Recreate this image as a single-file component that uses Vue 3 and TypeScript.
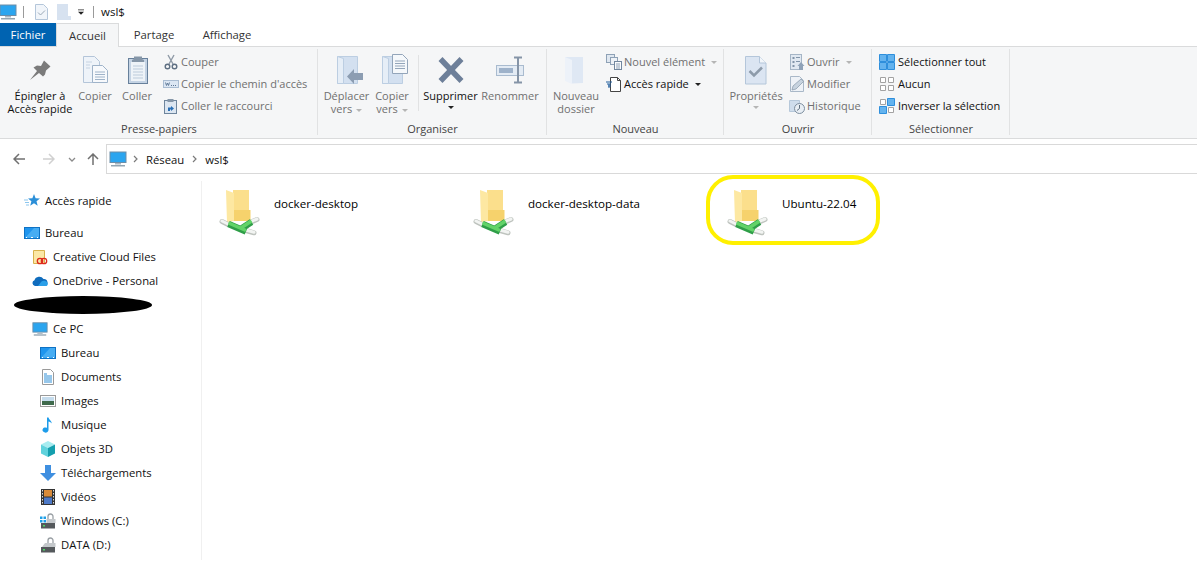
<template>
  <div class="win">
    <svg class="defs" width="0" height="0">
      <defs>
        <symbol id="pc" viewBox="0 0 18 16">
          <rect x="1" y="1" width="16" height="10.5" fill="#2ba5ef" stroke="#6c8da8" />
          <rect x="6" y="12" width="6" height="1.5" fill="#a9b7c2" />
          <rect x="2" y="14" width="14" height="1.5" fill="#93a5b2" />
        </symbol>
        <symbol id="pin" viewBox="0 0 32 32">
          <path fill="#7b7b7b" d="M6 26 13 17 9.500 13.500 13 11.500 17 12 20 6.500 26.500 12.500 22 16.500 21 20.500 19 22.500 15 19Z" />
        </symbol>
        <symbol id="copy" viewBox="0 0 32 32">
          <path d="M4.500 2.500h11l5 5v21h-16z" fill="#eef3f9" stroke="#b4c5d9" />
          <path d="M13.500 11.500h10l5 5v12h-15z" fill="#f7f9fc" stroke="#9fb3c9" />
          <path d="M16 18h10M16 20.500h10M16 23h10M16 25.500h10" stroke="#9fb3c9" />
          <path d="M7 8h6M7 11h4M7 14h4" stroke="#c6d3e2" />
        </symbol>
        <symbol id="paste" viewBox="0 0 32 32">
          <rect x="7.500" y="4.500" width="19" height="25" fill="#c4d3e4" stroke="#67809b" />
          <rect x="10" y="8" width="14" height="19" fill="#eef3f8" />
          <path d="M12 12h10M12 15h10M12 18h10M12 21h10M12 24h10" stroke="#bccbdb" />
          <path d="M13 5V2.500h8V5l2 1v2H11V6z" fill="#8596a8" />
        </symbol>
        <symbol id="move" viewBox="0 0 32 32">
          <path d="M6.500 2.500h20v27h-20z" fill="#d3e0f0" stroke="#bccee2" />
          <path d="M6.500 2.500l6 2v25h-6z" fill="#e6eef7" stroke="#bccee2" />
          <path d="M16 22.500 23 15v4h9v7h-9v4z" fill="#8c9db2" />
        </symbol>
        <symbol id="copyto" viewBox="0 0 32 32">
          <path d="M6.500 2.500h20v27h-20z" fill="#d3e0f0" stroke="#bccee2" />
          <path d="M6.500 2.500l6 2v25h-6z" fill="#e6eef7" stroke="#bccee2" />
          <path d="M16.500.500h10l5 5v14h-15z" fill="#f5f8fb" stroke="#93a5ba" />
          <path d="M19 7h10M19 9.500h10M19 12h10M19 14.500h10" stroke="#93a5ba" />
        </symbol>
        <symbol id="del" viewBox="0 0 32 32">
          <path d="M5.500 5 26.500 27M26.500 5 5.500 27" stroke="#6d7f99" stroke-width="5.500" />
        </symbol>
        <symbol id="rename" viewBox="0 0 32 32">
          <rect x="2.500" y="11.500" width="27" height="10" fill="#e3ebf4" stroke="#a9bbcf" />
          <rect x="5" y="14" width="14" height="5" fill="#9eb2ca" />
          <path d="M20 3.500h8M20 28.500h8M24 4v24" stroke="#8594a7" stroke-width="2" />
        </symbol>
        <symbol id="newfolder" viewBox="0 0 32 32">
          <path d="M5 3h18v26l-11 .5z" fill="#dfe8f4" />
          <path d="M5 3l7 3v24l-7-3z" fill="#edf2f9" />
        </symbol>
        <symbol id="props" viewBox="0 0 32 32">
          <path d="M5.500 2.500h14l6.500 6.500v21h-20.500z" fill="#dbe5f2" stroke="#b4c6da" />
          <path d="M19.500 2.500V9H26" fill="#f2f6fa" stroke="#b4c6da" />
          <path d="M9.500 17 14 21.500l8-8" fill="none" stroke="#8d9baa" stroke-width="2.500" />
        </symbol>
        <symbol id="cut" viewBox="0 0 16 16">
          <path d="M5 1l5 9M11 1 6 10" stroke="#8f9aa6" stroke-width="1.400" fill="none" />
          <circle cx="4.500" cy="12.500" r="2.300" fill="none" stroke="#5e6f82" stroke-width="1.400" />
          <circle cx="11.500" cy="12.500" r="2.300" fill="none" stroke="#5e6f82" stroke-width="1.400" />
        </symbol>
        <symbol id="path" viewBox="0 0 16 16">
          <rect x=".5" y="4.500" width="15" height="7" fill="#dbe6f3" stroke="#a9bcd2" />
          <path d="M2.500 6.500 3.500 9.500 4.500 7 5.500 9.500 6.500 6.500" fill="none" stroke="#5b7594" stroke-width=".9" />
          <path d="M8 9.500h1M10 9.500h1M12 9.500h1" stroke="#5b7594" />
        </symbol>
        <symbol id="shortcut" viewBox="0 0 16 16">
          <rect x="1.500" y="2.500" width="12" height="13" fill="#dce6f1" stroke="#6e859d" />
          <rect x="4.500" y="1" width="6" height="3" fill="#8596a8" />
          <path d="M5 13V9.500h3V8l3 2.500L8 13v-1.500H7V13z" fill="#2a6fb5" />
        </symbol>
        <symbol id="newitem" viewBox="0 0 16 16">
          <rect x=".5" y=".5" width="8" height="8" fill="#dfe7f0" stroke="#8ea1b6" />
          <rect x="4.500" y="3.500" width="7" height="7" fill="#eef2f7" stroke="#8ea1b6" />
          <rect x="8.500" y="7.500" width="7" height="8" fill="#fafbfd" stroke="#73889f" />
          <path d="M10 10h4M10 12h4M10 14h4" stroke="#8ea1b6" />
        </symbol>
        <symbol id="quick" viewBox="0 0 16 16">
          <path d="M4.500 1.500h7l3 3v11h-10z" fill="#fff" stroke="#454545" />
          <path d="M11.500 1.500v3h3" fill="none" stroke="#454545" />
          <path d="M0 6h6M1 8h4M2 10h3M3 8v4" stroke="#1f5d9c" />
        </symbol>
        <symbol id="open" viewBox="0 0 16 16">
          <rect x="1.500" y=".5" width="11" height="15" fill="#e0e8f1" stroke="#a5b5c6" />
          <path d="M3.500 3h2v2h-2zM3.500 7h2v2h-2zM3.500 11h2v2h-2z" fill="#8194a9" />
          <path d="M7 3.500h4M7 7.500h4" stroke="#8194a9" />
          <path d="M12 8l3.500 4H14v4h-4v-4H8.500z" fill="#8fa2b8" />
        </symbol>
        <symbol id="edit" viewBox="0 0 16 16">
          <path d="M1.500.5h9l4 4v11h-13z" fill="#eef2f7" stroke="#a9b8c8" />
          <path d="M3 14l1-4L12 3l2.500 2.500L7 13z" fill="#c7d3df" stroke="#8596a8" stroke-width=".7" />
        </symbol>
        <symbol id="history" viewBox="0 0 16 16">
          <path d="M.5 2.500h10v11H.5z" fill="#cfddec" stroke="#b6c8da" />
          <circle cx="10.500" cy="10.500" r="5" fill="#e8eef4" stroke="#7d8e9f" />
          <path d="M10.500 7v3.500l-2.500 2" fill="none" stroke="#5f7080" />
        </symbol>
        <symbol id="selall" viewBox="0 0 16 16">
          <path d="M.5.500h7v7h-7zM8.500.500h7v7h-7zM.5 8.500h7v7h-7zM8.500 8.500h7v7h-7z" fill="#64b3ee" stroke="#2e8fdc" />
        </symbol>
        <symbol id="selnone" viewBox="0 0 16 16">
          <path d="M1.500 1.500h5v5h-5zM9.500 1.500h5v5h-5zM1.500 9.500h5v5h-5zM9.500 9.500h5v5h-5z" fill="#fff" stroke="#a2a2a2" />
        </symbol>
        <symbol id="selinv" viewBox="0 0 16 16">
          <path d="M1.500 1.500h5v5h-5zM9.500 9.500h5v5h-5z" fill="#fff" stroke="#a2a2a2" />
          <path d="M8.500.500h7v7h-7zM.5 8.500h7v7h-7z" fill="#64b3ee" stroke="#2e8fdc" />
        </symbol>
        <symbol id="star" viewBox="0 0 16 16">
          <path d="M10 1l1.600 4.300 4.400.2-3.500 2.800 1.200 4.500L10 10.300 6.200 12.800l1.200-4.500L4 5.500l4.400-.2z" fill="#2b8fd8" />
          <path d="M0 7h4M1 9.500h4M2 12h3" stroke="#8cc6ee" />
        </symbol>
        <symbol id="desktop" viewBox="0 0 16 12">
          <rect x=".5" y=".5" width="15" height="11" fill="#1f95ee" stroke="#0f72c4" />
          <path d="M1 11 10 1h5v9.500z" fill="#47adf3" />
          <path d="M2 10.500h1M7 10.500h2M13 10.500h1" stroke="#fff" />
        </symbol>
        <symbol id="cc" viewBox="0 0 16 16">
          <path d="M1.500 1.500h11v13h-11z" fill="#fbe8a6" stroke="#d8b24c" />
          <circle cx="8" cy="12" r="2.700" fill="none" stroke="#dd2a1c" stroke-width="1.300" />
          <circle cx="12" cy="12" r="2.700" fill="none" stroke="#dd2a1c" stroke-width="1.300" />
        </symbol>
        <symbol id="onedrive" viewBox="0 0 16 12">
          <path d="M3 11a3 3 0 0 1-.5-5.800A5 5 0 0 1 11.500 4 3.600 3.600 0 0 1 13 11z" fill="#0f6cbd" />
          <path d="M6 11l3.500-4.500c2-1.200 4.500-.8 6 1.200.8 1.500 0 3.300-2 3.300z" fill="#2a9fe8" />
        </symbol>
        <symbol id="docs" viewBox="0 0 16 16">
          <path d="M2.500.5h8l3 3v12h-11z" fill="#fff" stroke="#9a9a9a" />
          <path d="M4 5h3M4 7h8M4 9h8M4 11h8M4 13h8" stroke="#2f8fd6" />
        </symbol>
        <symbol id="images" viewBox="0 0 16 12">
          <rect x=".5" y=".5" width="15" height="11" fill="#fff" stroke="#9a9a9a" />
          <rect x="2" y="2" width="12" height="4" fill="#c5dced" />
          <rect x="2" y="6" width="12" height="4" fill="#3f6a4c" />
        </symbol>
        <symbol id="music" viewBox="0 0 16 16">
          <path d="M7 .5h1.500c.4 2.400 3 3.200 3.500 6-1-1-2.300-1.800-3.500-2V13a3 2.600 0 1 1-1.500-2.200z" fill="#1d9cea" />
        </symbol>
        <symbol id="cube" viewBox="0 0 16 16">
          <path d="M8 0l7 3.500-7 3.500-7-3.500z" fill="#a7ecf0" />
          <path d="M1 3.500l7 3.500v9l-7-3.500z" fill="#5fd2dc" />
          <path d="M15 3.500l-7 3.500v9l7-3.500z" fill="#149fae" />
        </symbol>
        <symbol id="down" viewBox="0 0 16 16">
          <path d="M5 0h6v8h5l-8 8-8-8h5z" fill="#3f8fe0" />
        </symbol>
        <symbol id="film" viewBox="0 0 16 16">
          <rect x="1" y="0" width="14" height="16" fill="#333" />
          <rect x="4" y="1" width="8" height="6.500" fill="#d98b3a" />
          <rect x="4" y="8.500" width="8" height="6.500" fill="#4d79c7" />
          <path d="M2.500 1v14M13.500 1v14" stroke="#ddd" stroke-dasharray="1.500 1.500" />
        </symbol>
        <symbol id="winc" viewBox="0 0 16 16">
          <path d="M0 3.500h2.500V6H0zM3.500 3.500H6V6H3.500zM0 7h2.500v2.500H0zM3.500 7H6v2.500H3.500z" fill="#1ea0e8" />
          <path d="M8 7V3.500a2.500 2.500 0 0 1 5 0V7" fill="none" stroke="#9aa0a5" stroke-width="1.300" />
          <rect x="6.500" y="6" width="9" height="4" fill="#c4c8cb" />
          <rect x="1" y="10" width="14" height="5.500" fill="#55595c" />
          <rect x="3" y="12" width="2" height="1.500" fill="#4cd964" />
        </symbol>
        <symbol id="data" viewBox="0 0 16 16">
          <path d="M8 7V3.500a2.500 2.500 0 0 1 5 0V7" fill="none" stroke="#9aa0a5" stroke-width="1.300" />
          <path d="M2 10l3-4h10.500v4z" fill="#c4c8cb" />
          <rect x="1" y="10" width="14" height="5.500" fill="#55595c" />
          <rect x="3" y="12" width="2" height="1.500" fill="#4cd964" />
        </symbol>
        <symbol id="netfolder" viewBox="0 0 48 48">
          <path d="M17 2h16v20h1.500v11H17z" fill="#f6d26c" />
          <path d="M17 2h16v20H17z" fill="#fbdf8c" />
          <path d="M10 2l8 3v28l-7 1.500z" fill="#fde8a2" />
          <path d="M6 33.500 12 36.500M30 42.500 38 44.800M35 34l6-2.500" stroke="#bfc4bf" stroke-width="5" stroke-linecap="round" />
          <path d="M6 33 12 36M30 42 38 44.300M35 33.500l6-2.500" stroke="#f2f4f2" stroke-width="3" stroke-linecap="round" />
          <path d="M12.500 36 30 43.500M24 41.500 35.500 34" stroke="#2f9e48" stroke-width="6.500" />
          <path d="M12.500 35 30 42.500M24 40.500 35.500 33" stroke="#62d368" stroke-width="3.500" />
        </symbol>
      </defs>
    </svg>

    <div class="titlebar">
      <svg class="title-pc"><use href="#pc" /></svg>
      <span class="vsep"></span>
      <svg class="qa-doc" viewBox="0 0 13 16">
        <path d="M.5.5h8l4 4v11H.5z" fill="#f1f5fa" stroke="#b4c6da" />
        <path d="M3 8.500l2.500 2.500 4.500-4.500" fill="none" stroke="#9aa8b6" />
      </svg>
      <svg class="qa-folder" viewBox="0 0 14 16">
        <path d="M0 0h11v12h3v4H0z" fill="#d7e2f0" />
      </svg>
      <svg class="qa-menu" viewBox="0 0 8 7">
        <path d="M0 0h8v1H0zM0 3h8L4 7z" fill="#222" />
      </svg>
      <span class="vsep last"></span>
      <span class="title-text">wsl$</span>
    </div>

    <div class="tabs">
      <div class="tab file">Fichier</div>
      <div class="tab home">Accueil</div>
      <div class="tab share">Partage</div>
      <div class="tab view">Affichage</div>
    </div>

    <div class="ribbon">
      <section v-for="g in groups" :key="g.label" class="group" :class="g.cls">
        <div class="group-body">
          <template v-for="(c, i) in g.items" :key="i">
            <div v-if="c.kind === 'sep'" class="col-sep"><span></span></div>
            <div v-else-if="c.kind === 'big'" class="big" :class="{ off: c.off }">
              <svg class="big-ic"><use :href="'#' + c.icon" /></svg>
              <div class="big-txt">
                <div v-for="l in c.lines" :key="l">{{ l }}<i v-if="c.inlineCaret && l === c.lines[c.lines.length - 1]" class="caret gray"></i></div>
                <i v-if="c.belowCaret" class="caret block" :class="{ gray: c.off }"></i>
              </div>
            </div>
            <div v-else class="smalls">
              <div v-for="r in c.rows" :key="r.text" class="small" :class="{ off: r.off }">
                <svg class="small-ic"><use :href="'#' + r.icon" /></svg>
                <span>{{ r.text }}</span>
                <i v-if="r.caret" class="caret" :class="{ gray: r.off }"></i>
              </div>
            </div>
          </template>
        </div>
        <div class="group-label">{{ g.label }}</div>
      </section>
    </div>

    <div class="navbar">
      <div class="nav-btns">
        <svg class="back" viewBox="0 0 12 12"><path d="M6 1 1 6l5 5M1 6h11" fill="none" stroke="#707070" stroke-width="1.500" /></svg>
        <svg class="fwd" viewBox="0 0 12 12"><path d="M6 1l5 5-5 5M11 6H0" fill="none" stroke="#d0d0d0" stroke-width="1.500" /></svg>
        <svg class="recent" viewBox="0 0 8 5"><path d="M1 1l3 3 3-3" fill="none" stroke="#8a8a8a" stroke-width="1.300" /></svg>
        <svg class="up" viewBox="0 0 12 12"><path d="M1 6l5-5 5 5M6 1v11" fill="none" stroke="#707070" stroke-width="1.500" /></svg>
      </div>
      <div class="address">
        <svg class="addr-pc"><use href="#pc" /></svg>
        <svg class="chev" viewBox="0 0 5 8"><path d="M1 1l3 3-3 3" fill="none" stroke="#7a7a7a" stroke-width="1.200" /></svg>
        <span class="crumb">Réseau</span>
        <svg class="chev" viewBox="0 0 5 8"><path d="M1 1l3 3-3 3" fill="none" stroke="#7a7a7a" stroke-width="1.200" /></svg>
        <span class="crumb">wsl$</span>
      </div>
    </div>

    <div class="body">
      <nav class="side">
        <template v-for="n in navItems" :key="n.text">
          <div v-if="n.hidden" class="blot"></div>
          <div v-else class="nav-row" :class="['lv' + n.level, { spaced: n.spaced }]">
            <svg class="nav-ic"><use :href="'#' + n.icon" /></svg>
            <span>{{ n.text }}</span>
          </div>
        </template>
      </nav>
      <main class="files">
        <div v-for="f in folders" :key="f.name" class="file-item">
          <svg class="file-ic"><use href="#netfolder" /></svg>
          <span class="file-name">{{ f.name }}</span>
          <span v-if="f.marked" class="mark"></span>
        </div>
      </main>
    </div>
  </div>
</template>

<script setup lang="ts">
interface Row { icon: string; text: string; off?: boolean; caret?: boolean }
interface Cell {
  kind: 'big' | 'small' | 'sep'
  icon?: string
  lines?: string[]
  off?: boolean
  inlineCaret?: boolean
  belowCaret?: boolean
  rows?: Row[]
}
interface Group { label: string; cls: string; items: Cell[] }

const groups: Group[] = [
  {
    label: 'Presse-papiers',
    cls: 'g-clip',
    items: [
      { kind: 'big', icon: 'pin', lines: ['Épingler à', 'Accès rapide'] },
      { kind: 'big', icon: 'copy', lines: ['Copier'], off: true },
      { kind: 'big', icon: 'paste', lines: ['Coller'], off: true },
      {
        kind: 'small',
        rows: [
          { icon: 'cut', text: 'Couper', off: true },
          { icon: 'path', text: "Copier le chemin d'accès", off: true },
          { icon: 'shortcut', text: 'Coller le raccourci', off: true },
        ],
      },
    ],
  },
  {
    label: 'Organiser',
    cls: 'g-org',
    items: [
      { kind: 'big', icon: 'move', lines: ['Déplacer', 'vers'], off: true, inlineCaret: true },
      { kind: 'big', icon: 'copyto', lines: ['Copier', 'vers'], off: true, inlineCaret: true },
      { kind: 'sep' },
      { kind: 'big', icon: 'del', lines: ['Supprimer'], belowCaret: true },
      { kind: 'big', icon: 'rename', lines: ['Renommer'], off: true },
    ],
  },
  {
    label: 'Nouveau',
    cls: 'g-new',
    items: [
      { kind: 'big', icon: 'newfolder', lines: ['Nouveau', 'dossier'], off: true },
      {
        kind: 'small',
        rows: [
          { icon: 'newitem', text: 'Nouvel élément', off: true, caret: true },
          { icon: 'quick', text: 'Accès rapide', caret: true },
        ],
      },
    ],
  },
  {
    label: 'Ouvrir',
    cls: 'g-open',
    items: [
      { kind: 'big', icon: 'props', lines: ['Propriétés'], off: true, belowCaret: true },
      {
        kind: 'small',
        rows: [
          { icon: 'open', text: 'Ouvrir', off: true, caret: true },
          { icon: 'edit', text: 'Modifier', off: true },
          { icon: 'history', text: 'Historique', off: true },
        ],
      },
    ],
  },
  {
    label: 'Sélectionner',
    cls: 'g-sel',
    items: [
      {
        kind: 'small',
        rows: [
          { icon: 'selall', text: 'Sélectionner tout' },
          { icon: 'selnone', text: 'Aucun' },
          { icon: 'selinv', text: 'Inverser la sélection' },
        ],
      },
    ],
  },
]

const navItems = [
  { icon: 'star', text: 'Accès rapide', level: 0, spaced: true },
  { icon: 'desktop', text: 'Bureau', level: 0 },
  { icon: 'cc', text: 'Creative Cloud Files', level: 1 },
  { icon: 'onedrive', text: 'OneDrive - Personal', level: 1 },
  { icon: '', text: 'masqué', level: 1, hidden: true },
  { icon: 'pc', text: 'Ce PC', level: 1 },
  { icon: 'desktop', text: 'Bureau ', level: 2 },
  { icon: 'docs', text: 'Documents', level: 2 },
  { icon: 'images', text: 'Images', level: 2 },
  { icon: 'music', text: 'Musique', level: 2 },
  { icon: 'cube', text: 'Objets 3D', level: 2 },
  { icon: 'down', text: 'Téléchargements', level: 2 },
  { icon: 'film', text: 'Vidéos', level: 2 },
  { icon: 'winc', text: 'Windows (C:)', level: 2 },
  { icon: 'data', text: 'DATA (D:)', level: 2 },
]

const folders = [
  { name: 'docker-desktop' },
  { name: 'docker-desktop-data' },
  { name: 'Ubuntu-22.04', marked: true },
]
</script>

<style>
html, body {
  margin: 0;
  background: #fff;
  overflow: hidden;
}
</style>

<style scoped>
.win {
  width: 1197px;
  height: 562px;
  overflow: hidden;
  background: #fff;
  color: #111;
  font-family: "Open Sans", "Liberation Sans", sans-serif;
  font-size: 11.3px;
}

.defs {
  display: block;
}

.titlebar {
  height: 23px;
  display: flex;
  align-items: center;
}
.title-pc {
  width: 18px;
  height: 16px;
  margin-left: -1px;
}
.vsep {
  width: 1px;
  height: 12px;
  background: #9a9a9a;
  margin: 0 11px 0 6px;
}
.vsep.last {
  margin: 0 7px 0 9px;
}
.qa-doc {
  width: 13px;
  height: 16px;
}
.qa-folder {
  width: 14px;
  height: 16px;
  margin-left: 9px;
}
.qa-menu {
  width: 6px;
  height: 6px;
  margin-left: 7px;
}
.title-text {
  font-size: 11.5px;
}

.tabs {
  height: 23px;
  display: flex;
  position: relative;
  z-index: 1;
}
.tab {
  display: flex;
  align-items: center;
  justify-content: center;
  color: #333;
}
.file {
  width: 56px;
  background: #0063b1;
  color: #fff;
}
.home {
  width: 63px;
  height: 24px;
  background: #f5f6f7;
  border: 1px solid #dadbdc;
  border-bottom: none;
  box-sizing: border-box;
}
.share {
  width: 70px;
}
.view {
  width: 76px;
}

.ribbon {
  height: 91px;
  display: flex;
  background: #f5f6f7;
  border-top: 1px solid #dadbdc;
  border-bottom: 1px solid #dadbdc;
  font-size: 11px;
}
.group {
  display: flex;
  flex-direction: column;
  box-sizing: border-box;
  position: relative;
}
.group::after {
  content: "";
  position: absolute;
  right: 0;
  top: 2px;
  bottom: 3px;
  width: 1px;
  background: #e1e2e3;
}
.g-clip { width: 318px; }
.g-org { width: 229px; }
.g-new { width: 177px; }
.g-open { width: 148px; }
.g-sel { width: 138px; }

.group-body {
  flex: 1;
  display: grid;
  grid-auto-flow: column;
  justify-content: start;
  min-height: 0;
}
.g-clip .group-body {
  grid-template-columns: 70px 40px 44px auto;
  padding-left: 5px;
}
.g-org .group-body {
  grid-template-columns: 51px 40px 12px 53px 66px;
  padding-left: 3px;
}
.g-new .group-body {
  grid-template-columns: 52px auto;
  padding-left: 3px;
}
.g-open .group-body {
  grid-template-columns: 58px auto;
  padding-left: 3px;
}
.g-sel .group-body {
  padding-left: 7px;
}
.group-label {
  height: 16px;
  line-height: 16px;
  text-align: center;
  color: #444;
  margin-bottom: 1px;
}

.big {
  display: flex;
  flex-direction: column;
  align-items: center;
  padding-top: 7px;
  text-align: center;
  white-space: nowrap;
}
.big-ic {
  width: 32px;
  height: 32px;
  flex: none;
}
.big-txt {
  margin-top: 3px;
  line-height: 13px;
}
.off {
  color: #707070;
}
.col-sep {
  display: flex;
  justify-content: center;
  padding-top: 8px;
}
.col-sep span {
  width: 1px;
  height: 56px;
  background: #e1e2e3;
}

.smalls {
  padding: 4px 0 0 4px;
}
.g-sel .smalls {
  padding-left: 0;
}
.small {
  height: 22px;
  display: flex;
  align-items: center;
  gap: 2px;
  white-space: nowrap;
}
.g-sel .small {
  gap: 3px;
}
.small span {
  padding-bottom: 2px;
}
.small-ic {
  width: 16px;
  height: 16px;
  flex: none;
}

.caret {
  display: inline-block;
  width: 0;
  height: 0;
  border-left: 3px solid transparent;
  border-right: 3px solid transparent;
  border-top: 3px solid #222;
  margin-left: 4px;
  vertical-align: middle;
}
.caret.gray {
  border-top-color: #b5b5b5;
}
.caret.block {
  display: block;
  margin: 4px auto 0;
}

.navbar {
  display: flex;
  margin-top: 5px;
}
.nav-btns {
  width: 106px;
  height: 30px;
  display: flex;
  align-items: center;
}
.back {
  width: 12px;
  height: 12px;
  margin-left: 13px;
}
.fwd {
  width: 12px;
  height: 12px;
  margin-left: 18px;
}
.recent {
  width: 8px;
  height: 5px;
  margin-left: 13px;
}
.up {
  width: 12px;
  height: 12px;
  margin-left: 11px;
}
.address {
  flex: 1;
  height: 30px;
  box-sizing: border-box;
  border: 1px solid #d9d9d9;
  border-right: none;
  display: flex;
  align-items: center;
  padding-left: 2px;
}
.addr-pc {
  width: 18px;
  height: 16px;
}
.chev {
  width: 5px;
  height: 8px;
  margin: 0 8px 0 6px;
}
.crumb {
  margin-right: 2px;
  color: #111;
}

.body {
  display: flex;
}
.side {
  width: 202px;
  box-sizing: border-box;
  height: 379px;
  margin-top: 7px;
  padding-top: 8px;
  border-right: 1px solid #f0f0f0;
}
.nav-row {
  height: 24px;
  display: flex;
  align-items: center;
  gap: 5px;
  white-space: nowrap;
}
.nav-row span {
  padding-bottom: 2px;
}
.nav-row.spaced {
  margin-bottom: 8px;
}
.lv0 { padding-left: 24px; }
.lv1 { padding-left: 32px; }
.lv2 { padding-left: 40px; }
.nav-ic {
  width: 16px;
  height: 16px;
  flex: none;
}
.blot {
  width: 138px;
  height: 18px;
  margin: 3px 0 3px 14px;
  border-radius: 50%;
  background: #000;
}

.files {
  flex: 1;
  display: grid;
  grid-template-columns: repeat(3, 254px);
  align-content: start;
  padding: 14px 0 0 14px;
}
.file-item {
  position: relative;
  display: flex;
  gap: 10px;
}
.file-ic {
  width: 48px;
  height: 48px;
  flex: none;
}
.file-name {
  padding-top: 8px;
  line-height: 16px;
  font-size: 11.6px;
  color: #000;
}
.mark {
  position: absolute;
  left: -18px;
  top: -13px;
  width: 174px;
  height: 70px;
  box-sizing: border-box;
  border: 4px solid #fff000;
  border-radius: 27px;
}
</style>
